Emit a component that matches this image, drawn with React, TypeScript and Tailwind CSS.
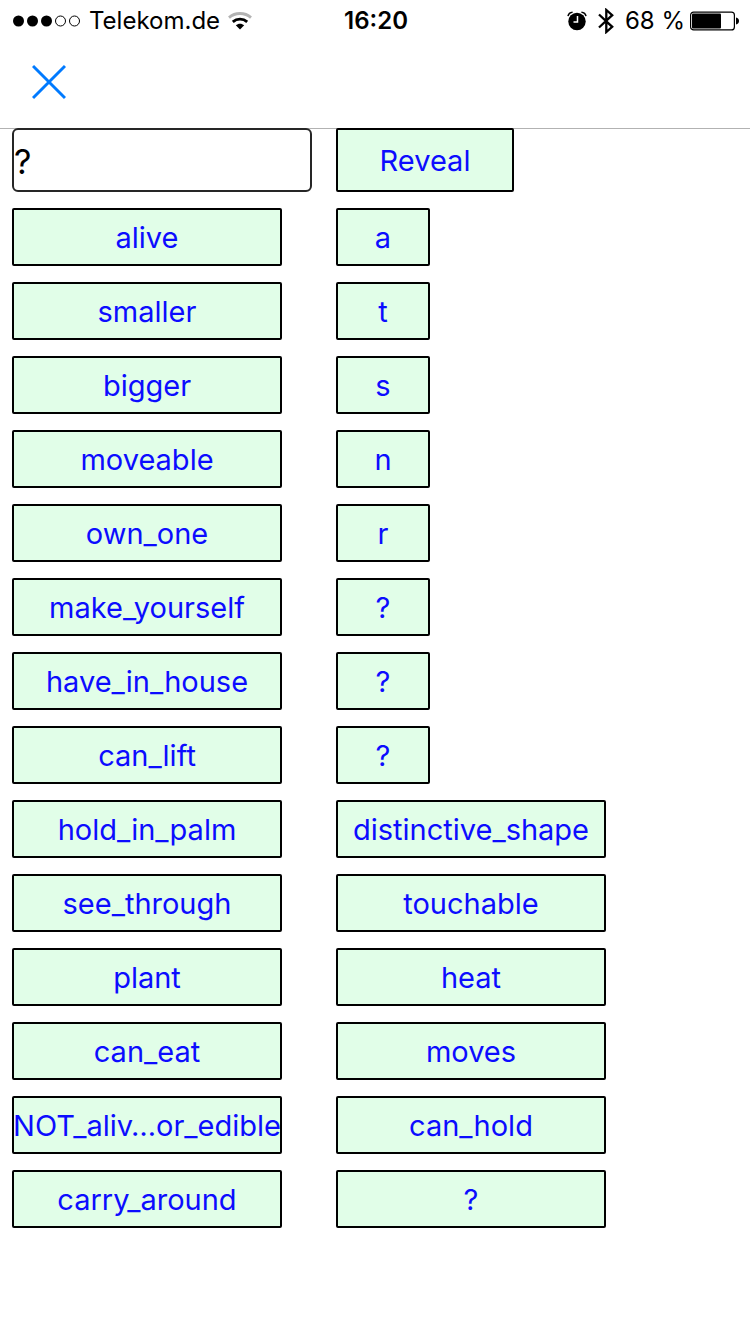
import { useState } from "react";

type Cell = { label: string; narrow?: boolean };

const rows: [Cell, Cell][] = [
  [{ label: "alive" }, { label: "a", narrow: true }],
  [{ label: "smaller" }, { label: "t", narrow: true }],
  [{ label: "bigger" }, { label: "s", narrow: true }],
  [{ label: "moveable" }, { label: "n", narrow: true }],
  [{ label: "own_one" }, { label: "r", narrow: true }],
  [{ label: "make_yourself" }, { label: "?", narrow: true }],
  [{ label: "have_in_house" }, { label: "?", narrow: true }],
  [{ label: "can_lift" }, { label: "?", narrow: true }],
  [{ label: "hold_in_palm" }, { label: "distinctive_shape" }],
  [{ label: "see_through" }, { label: "touchable" }],
  [{ label: "plant" }, { label: "heat" }],
  [{ label: "can_eat" }, { label: "moves" }],
  [{ label: "NOT_aliv…or_edible" }, { label: "can_hold" }],
  [{ label: "carry_around" }, { label: "?" }],
];

const buttonBase =
  "flex items-center justify-center whitespace-nowrap rounded-[2px] border-2 border-black bg-[#e1fee8] pt-0.5 text-[29px] leading-9 text-[#0c0cff]";

function SignalDots() {
  return (
    <svg className="h-3 w-[68px]" viewBox="0 0 68 12" aria-hidden="true">
      <circle cx="5.5" cy="6" r="5.5" />
      <circle cx="19.5" cy="6" r="5.5" />
      <circle cx="33.5" cy="6" r="5.5" />
      <circle cx="47.5" cy="6" r="5" fill="none" stroke="black" />
      <circle cx="61.5" cy="6" r="5" fill="none" stroke="black" />
    </svg>
  );
}

function WifiIcon() {
  return (
    <svg className="h-[18px] w-6" viewBox="0 0 24 18" fill="none" aria-hidden="true">
      <path d="M1 5.6C7.2 .1 16.8 .1 23 5.6" stroke="#b3b3b3" strokeWidth="2.8" />
      <path d="M4.8 9.9C9 6.1 15 6.1 19.2 9.9" stroke="black" strokeWidth="2.8" />
      <path d="M7.8 13.2C10.2 11.1 13.8 11.1 16.2 13.2L12 17.5Z" fill="black" />
    </svg>
  );
}

function AlarmIcon() {
  return (
    <svg className="h-5 w-5" viewBox="0 0 20 20" fill="none" aria-hidden="true">
      <circle cx="10" cy="10.5" r="8.7" fill="black" />
      <path d="M1 5.2C1.4 3 3.2 1.4 5.6 1.2M19 5.2C18.6 3 16.8 1.4 14.4 1.2" stroke="black" strokeWidth="1.5" />
      <path d="M10.5 5V11H6.5" stroke="white" strokeWidth="1.5" />
    </svg>
  );
}

function BluetoothIcon() {
  return (
    <svg className="h-[26px] w-4" viewBox="0 0 16 26" fill="none" stroke="black" strokeWidth="2.3" aria-hidden="true">
      <path d="M1 6.5L14.2 18.8L8.3 24V2L14.2 7.2L1 19.5" />
    </svg>
  );
}

function BatteryIcon() {
  return (
    <svg className="h-5 w-[49px]" viewBox="0 0 49 20" aria-hidden="true">
      <rect x=".6" y="1.1" width="43.8" height="17.8" rx="3" fill="none" stroke="black" strokeWidth="1.2" />
      <rect x="2" y="2.5" width="29" height="15" rx="1" />
      <path d="M46 6.5C48 7 49 8.3 49 10S48 13 46 13.5Z" />
    </svg>
  );
}

function StatusBar() {
  return (
    <div className="grid h-[42px] grid-cols-[1fr_auto_1fr] items-center pl-[13px] pr-[11px] text-2xl text-black">
      <div className="flex items-center gap-2">
        <SignalDots />
        <span>Telekom.de</span>
        <WifiIcon />
      </div>
      <time className="font-semibold">16:20</time>
      <div className="flex items-center justify-end">
        <AlarmIcon />
        <span className="px-[11px]">
          <BluetoothIcon />
        </span>
        <span className="pr-[5px]">68 %</span>
        <BatteryIcon />
      </div>
    </div>
  );
}

export default function App() {
  const [guess, setGuess] = useState("?");

  return (
    <div className="min-h-screen bg-white font-['Inter','Liberation_Sans',sans-serif]">
      <StatusBar />
      <header className="h-[87px] border-b border-[#b2b2b2] px-8 pt-[22px]">
        <button type="button" aria-label="Close" className="block text-[#007aff]">
          <svg className="h-9 w-[34px]" viewBox="0 0 34 36" fill="none" stroke="currentColor" strokeWidth="3">
            <path d="M1 2L33 34M33 2L1 34" />
          </svg>
        </button>
      </header>
      <main className="relative -mt-px grid grid-cols-[minmax(0,300px)_minmax(0,270px)] gap-x-6 gap-y-4 px-3 pb-8">
        <input
          type="text"
          aria-label="Guess"
          value={guess}
          onChange={(e) => setGuess(e.target.value)}
          className="h-16 w-full rounded-md border-2 border-[#262626] bg-white pt-0.5 text-[34px] text-black outline-none"
        />
        <button type="button" className={`${buttonBase} h-16 w-[178px]`}>
          Reveal
        </button>
        {rows.map(([left, right]) => (
          <div key={left.label} className="col-span-2 grid grid-cols-subgrid">
            <button type="button" className={`${buttonBase} h-[58px] w-[90%]`}>
              {left.label}
            </button>
            <button type="button" className={`${buttonBase} h-[58px] ${right.narrow ? "w-[94px]" : "w-full"}`}>
              {right.label}
            </button>
          </div>
        ))}
      </main>
    </div>
  );
}
